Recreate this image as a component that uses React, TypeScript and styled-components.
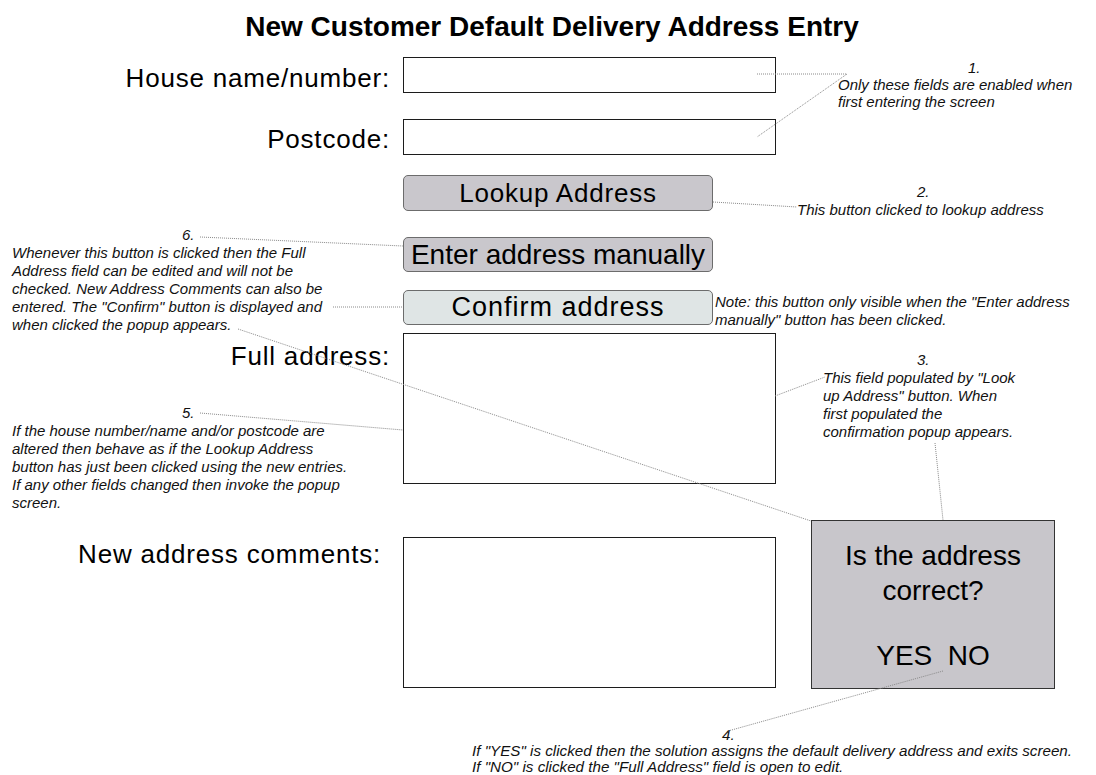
import React from 'react';
import styled, { createGlobalStyle } from 'styled-components';

const GlobalStyle = createGlobalStyle`
  html, body {
    margin: 0;
    padding: 0;
    background: #ffffff;
  }
  body {
    font-family: "Liberation Sans", Arial, sans-serif;
    color: #000000;
  }
`;

const Page = styled.div`
  position: relative;
  width: 1096px;
  height: 775px;
  overflow: hidden;
  background: #ffffff;
`;

const Title = styled.h1`
  margin: 0;
  height: 57px;
  box-sizing: border-box;
  padding: 12px 0 0 8px;
  font-size: 28px;
  line-height: 30px;
  font-weight: bold;
  text-align: center;
`;

const Form = styled.div`
  display: flex;
  flex-direction: column;
`;

const Row = styled.div<{ $mt: number }>`
  display: grid;
  grid-template-columns: 390px auto;
  column-gap: 13px;
  align-items: start;
  margin-top: ${p => p.$mt}px;
`;

const Label = styled.div<{ $top: number; $right?: number }>`
  padding-top: ${p => p.$top}px;
  padding-right: ${p => p.$right || 0}px;
  font-size: 26px;
  line-height: 26px;
  letter-spacing: 0.8px;
  text-align: right;
  white-space: nowrap;
`;

const Field = styled.div<{ $h: number }>`
  width: 373px;
  height: ${p => p.$h}px;
  box-sizing: border-box;
  border: 1px solid #1c1c1c;
  background: #ffffff;
`;

const Button = styled.div<{ $h: number; $size: number; $spacing: number; $light?: boolean }>`
  width: 310px;
  height: ${p => p.$h}px;
  box-sizing: border-box;
  display: flex;
  align-items: center;
  justify-content: center;
  border: 1px solid #6c6c6c;
  border-radius: 5px;
  background: ${p => (p.$light ? '#dfe5e5' : '#c9c7cc')};
  font-size: ${p => p.$size}px;
  letter-spacing: ${p => p.$spacing}px;
  white-space: nowrap;
`;

const Popup = styled.div`
  position: absolute;
  left: 811px;
  top: 520px;
  width: 244px;
  height: 169px;
  box-sizing: border-box;
  padding-top: 17px;
  border: 1px solid #333333;
  background: #c8c6cb;
  font-size: 28px;
  line-height: 35px;
  text-align: center;
`;

const Answers = styled.div`
  margin-top: 30px;
  white-space: pre;
`;

const Note = styled.div<{ $x: number; $y: number; $size?: number; $lh?: number }>`
  position: absolute;
  left: ${p => p.$x}px;
  top: ${p => p.$y}px;
  font-size: ${p => p.$size || 15}px;
  line-height: ${p => p.$lh || 18}px;
  font-style: italic;
  color: #111111;
  white-space: pre;
`;

const NoteNum = styled.div<{ $pad: number }>`
  padding-left: ${p => p.$pad}px;
`;

const Connectors = styled.svg`
  position: absolute;
  left: 0;
  top: 0;
  pointer-events: none;
`;

const lines: [number, number, number, number][] = [
  [757, 74, 847, 74],
  [847, 74, 757, 137],
  [713, 202, 797, 207],
  [200, 237, 403, 246],
  [333, 307, 403, 307],
  [238, 329, 811, 521],
  [200, 413, 403, 430],
  [775, 396, 825, 377],
  [935, 443, 943, 520],
  [943, 671, 728, 731],
];

type NoteData = { x: number; y: number; num: string; pad: number; text: string; size?: number; lh?: number };

const notes: NoteData[] = [
  { x: 838, y: 59, num: '1.', pad: 130, lh: 17, text: 'Only these fields are enabled when\nfirst entering the screen' },
  { x: 797, y: 183, num: '2.', pad: 120, text: 'This button clicked to lookup address' },
  {
    x: 823, y: 351, num: '3.', pad: 94,
    text: 'This field populated by "Look\nup Address" button. When\nfirst populated the\nconfirmation popup appears.',
  },
  {
    x: 472, y: 727, num: '4.', pad: 250, size: 15.2, lh: 16,
    text: 'If "YES" is clicked then the solution assigns the default delivery address and exits screen.\nIf "NO" is clicked the "Full Address" field is open to edit.',
  },
  {
    x: 12, y: 404, num: '5.', pad: 170,
    text: 'If the house number/name and/or postcode are\naltered then behave as if the Lookup Address\nbutton has just been clicked using the new entries.\nIf any other fields changed then invoke the popup\nscreen.',
  },
  {
    x: 12, y: 226, num: '6.', pad: 170,
    text: 'Whenever this button is clicked then the Full\nAddress field can be edited and will not be\nchecked. New Address Comments can also be\nentered. The "Confirm" button is displayed and\nwhen clicked the popup appears.',
  },
  { x: 715, y: 293, num: '', pad: 0, text: 'Note: this button only visible when the "Enter address\nmanually" button has been clicked.' },
];

const App: React.FC = () => (
  <>
    <GlobalStyle />
    <Page>
      <Title>New Customer Default Delivery Address Entry</Title>

      <Form>
        <Row $mt={0}>
          <Label $top={8}>House name/number:</Label>
          <Field $h={36} />
        </Row>
        <Row $mt={26}>
          <Label $top={7}>Postcode:</Label>
          <Field $h={36} />
        </Row>
        <Row $mt={20}>
          <span />
          <Button $h={36} $size={26} $spacing={0.8}>Lookup Address</Button>
        </Row>
        <Row $mt={26}>
          <span />
          <Button $h={35} $size={28} $spacing={0}>Enter address manually</Button>
        </Row>
        <Row $mt={18}>
          <span />
          <Button $h={35} $size={27} $spacing={1} $light>Confirm address</Button>
        </Row>
        <Row $mt={8}>
          <Label $top={10}>Full address:</Label>
          <Field $h={151} />
        </Row>
        <Row $mt={53}>
          <Label $top={4} $right={9}>New address comments:</Label>
          <Field $h={151} />
        </Row>
      </Form>

      <Popup>
        <div>Is the address</div>
        <div>correct?</div>
        <Answers>{'YES  NO'}</Answers>
      </Popup>

      {notes.map(n => (
        <Note key={n.text} $x={n.x} $y={n.y} $size={n.size} $lh={n.lh}>
          {n.num && <NoteNum $pad={n.pad}>{n.num}</NoteNum>}
          {n.text}
        </Note>
      ))}

      <Connectors width={1096} height={775}>
        {lines.map(([x1, y1, x2, y2], i) => (
          <line
            key={i}
            x1={x1}
            y1={y1}
            x2={x2}
            y2={y2}
            stroke="#8a8a8a"
            strokeWidth={1}
            strokeDasharray="1 1"
          />
        ))}
      </Connectors>
    </Page>
  </>
);

export default App;
